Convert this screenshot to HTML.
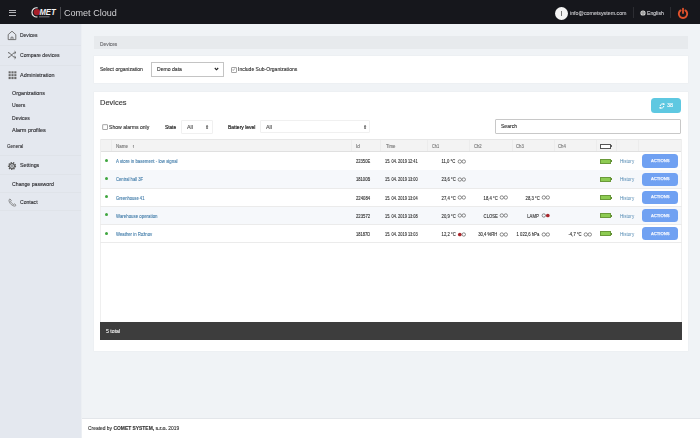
<!DOCTYPE html>
<html><head><meta charset="utf-8">
<style>
*{box-sizing:border-box;margin:0;padding:0}
html,body{width:700px;height:438px;overflow:hidden}
body{font-family:"Liberation Sans",sans-serif;background:#eef1f5;position:relative;color:#333}
.a{position:absolute}
.t{filter:blur(0.3px);position:absolute;white-space:nowrap;line-height:1;-webkit-text-stroke:0.12px currentColor}
</style></head><body>
<div class="a" style="left:0px;top:0px;width:700px;height:24.6px;background:#16171c;"></div>
<div class="a" style="left:8.6px;top:9.950000000000001px;width:7.8px;height:0.9px;background:#b4b4b8;"></div>
<div class="a" style="left:8.6px;top:12.350000000000001px;width:7.8px;height:0.9px;background:#b4b4b8;"></div>
<div class="a" style="left:8.6px;top:14.850000000000001px;width:7.8px;height:0.9px;background:#b4b4b8;"></div>
<svg class="a" style="left:28px;top:4px" width="34" height="17" viewBox="0 0 34 17">
<circle cx="8.9" cy="8.1" r="3.2" fill="#a81e28"/>
<path d="M9.6 3.9 A4.6 4.6 0 1 0 9.4 12.9" stroke="#e8e8e8" stroke-width="1.2" fill="none"/>
<text x="11.4" y="10.6" font-family="Liberation Sans" font-weight="700" font-style="italic" font-size="8.6" fill="#f2f2f2" textLength="16.2" lengthAdjust="spacingAndGlyphs">MET</text>
<rect x="11" y="12.2" width="10.5" height="1.2" fill="#6a6a6e"/>
</svg>
<div class="a" style="left:59.5px;top:6.7px;width:1px;height:12px;background:#4a4b50;"></div>
<div class="t" style="left:63.6px;top:8.23px;font-size:9.5px;color:#d2d2d5;font-weight:400;transform:scaleX(0.952);transform-origin:left center;-webkit-text-stroke:0;">Comet Cloud</div>
<div class="a" style="left:554.5px;top:7px;width:13px;height:13px;border-radius:50%;background:#f4f4f4"></div>
<div class="a" style="left:560.8px;top:11.2px;width:0.5px;height:4.6px;background:#777;"></div>
<div class="t" style="left:570.4px;top:10.86px;font-size:5.4px;color:#c4c4c8;font-weight:400;transform:scaleX(0.981);transform-origin:left center;">info@cometsystem.com</div>
<div class="a" style="left:633px;top:7px;width:0.6px;height:11px;background:#2c2d32;"></div>
<svg class="a" style="left:640px;top:9.7px" width="6" height="6" viewBox="0 0 6 6"><circle cx="3" cy="3" r="2.6" fill="#dedede"/><path d="M0.6 3 H5.4 M3 0.5 C1.8 1.8 1.8 4.2 3 5.5 C4.2 4.2 4.2 1.8 3 0.5" stroke="#555" stroke-width="0.45" fill="none"/></svg>
<div class="t" style="left:646.9px;top:10.51px;font-size:5.3px;color:#d0d0d4;font-weight:400;transform:scaleX(0.966);transform-origin:left center;">English</div>
<div class="a" style="left:670px;top:7px;width:0.6px;height:11px;background:#2c2d32;"></div>
<svg class="a" style="left:676px;top:6px" width="14" height="14" viewBox="0 0 14 14">
<path d="M4.6 4.4 A4.2 4.2 0 1 0 9.4 4.4" stroke="#e0522c" stroke-width="1.9" fill="none" stroke-linecap="round"/>
<line x1="7" y1="2.6" x2="7" y2="7" stroke="#e0522c" stroke-width="1.8" stroke-linecap="round"/>
</svg>
<div class="a" style="left:0px;top:24px;width:81px;height:414px;background:#e4e8ef;"></div>
<div class="a" style="left:81px;top:24px;width:1px;height:414px;background:#eceff3;"></div>
<div class="a" style="left:0px;top:45.2px;width:81px;height:0.6px;background:#dfe3e9;"></div>
<div class="a" style="left:0px;top:65.2px;width:81px;height:0.6px;background:#dfe3e9;"></div>
<div class="a" style="left:0px;top:155px;width:81px;height:0.6px;background:#dfe3e9;"></div>
<div class="a" style="left:0px;top:173.6px;width:81px;height:0.6px;background:#dfe3e9;"></div>
<div class="a" style="left:0px;top:192px;width:81px;height:0.6px;background:#dfe3e9;"></div>
<div class="a" style="left:0px;top:209.5px;width:81px;height:0.6px;background:#dfe3e9;"></div>
<svg class="a" style="left:7px;top:30px" width="10" height="11" viewBox="0 0 10 11">
<path d="M1.2 4.6 L5 1.2 L8.8 4.6 L8.8 9.6 L1.2 9.6 Z" stroke="#666" stroke-width="0.9" fill="none" stroke-linejoin="round"/>
<path d="M4 9.6 V7.2 H6 V9.6" stroke="#666" stroke-width="0.8" fill="none"/>
</svg>
<div class="t" style="left:19.7px;top:33.11px;font-size:5.3px;color:#2c2c30;font-weight:400;transform:scaleX(0.934);transform-origin:left center;">Devices</div>
<svg class="a" style="left:7px;top:50px" width="10" height="10" viewBox="0 0 10 10">
<path d="M1 2.5 C4 2.5 5 7.5 8.5 7.5 M1 7.5 C4 7.5 5 2.5 8.5 2.5" stroke="#555" stroke-width="0.9" fill="none"/>
<path d="M7.5 1.2 L9 2.5 L7.5 3.8 M7.5 6.2 L9 7.5 L7.5 8.8" stroke="#555" stroke-width="0.8" fill="none"/>
</svg>
<div class="t" style="left:19.7px;top:52.91px;font-size:5.3px;color:#2c2c30;font-weight:400;transform:scaleX(0.960);transform-origin:left center;">Compare devices</div>
<svg class="a" style="left:7.5px;top:70.5px" width="9" height="9" viewBox="0 0 9 9"><rect x="0.6" y="0.3" width="2.1" height="2.1" fill="#6a6a6a"/><rect x="0.6" y="3.15" width="2.1" height="2.1" fill="#6a6a6a"/><rect x="0.6" y="6.0" width="2.1" height="2.1" fill="#6a6a6a"/><rect x="3.45" y="0.3" width="2.1" height="2.1" fill="#6a6a6a"/><rect x="3.45" y="3.15" width="2.1" height="2.1" fill="#6a6a6a"/><rect x="3.45" y="6.0" width="2.1" height="2.1" fill="#6a6a6a"/><rect x="6.3" y="0.3" width="2.1" height="2.1" fill="#6a6a6a"/><rect x="6.3" y="3.15" width="2.1" height="2.1" fill="#6a6a6a"/><rect x="6.3" y="6.0" width="2.1" height="2.1" fill="#6a6a6a"/></svg>
<div class="t" style="left:19.7px;top:72.91px;font-size:5.3px;color:#2c2c30;font-weight:400;transform:scaleX(1.027);transform-origin:left center;">Administration</div>
<div class="t" style="left:12px;top:91.31px;font-size:5.3px;color:#2c2c30;font-weight:400;transform:scaleX(1.009);transform-origin:left center;">Organizations</div>
<div class="t" style="left:12px;top:103.21px;font-size:5.3px;color:#2c2c30;font-weight:400;transform:scaleX(0.961);transform-origin:left center;">Users</div>
<div class="t" style="left:12px;top:115.61px;font-size:5.3px;color:#2c2c30;font-weight:400;transform:scaleX(0.949);transform-origin:left center;">Devices</div>
<div class="t" style="left:12px;top:127.91px;font-size:5.3px;color:#2c2c30;font-weight:400;transform:scaleX(1.046);transform-origin:left center;">Alarm profiles</div>
<div class="t" style="left:6.8px;top:145.34px;font-size:4.8px;color:#3a3a3e;font-weight:400;transform:scaleX(0.954);transform-origin:left center;">General</div>
<svg class="a" style="left:7px;top:160.5px" width="10" height="10" viewBox="0 0 10 10">
<circle cx="5" cy="5" r="3.3" stroke="#5a5a5a" stroke-width="1.6" fill="none" stroke-dasharray="1.3 1.0"/>
<circle cx="5" cy="5" r="2.4" stroke="#5a5a5a" stroke-width="1.1" fill="none"/>
<circle cx="5" cy="5" r="0.9" fill="#7a7a7a"/>
</svg>
<div class="t" style="left:19.7px;top:163.11px;font-size:5.3px;color:#2c2c30;font-weight:400;transform:scaleX(1.008);transform-origin:left center;">Settings</div>
<div class="t" style="left:12px;top:181.61px;font-size:5.3px;color:#2c2c30;font-weight:400;transform:scaleX(0.981);transform-origin:left center;">Change password</div>
<svg class="a" style="left:8px;top:198px" width="9" height="9" viewBox="0 0 10 10">
<path d="M2.2 1 C1 1.6 0.8 3 1.6 4.6 C2.6 6.6 4.4 8.4 6.6 8.9 C7.8 9.2 8.6 8.8 8.9 8 L7.4 6.6 L6.2 7.2 C4.8 6.6 3.4 5.2 2.9 3.9 L3.6 2.7 Z" stroke="#666" stroke-width="0.8" fill="none" stroke-linejoin="round"/>
</svg>
<div class="t" style="left:19.7px;top:200.41px;font-size:5.3px;color:#2c2c30;font-weight:400;transform:scaleX(0.963);transform-origin:left center;">Contact</div>
<div class="a" style="left:82px;top:24px;width:618px;height:394px;background:#f0f3f6;"></div>
<div class="a" style="left:94px;top:35.6px;width:594px;height:13.9px;background:#e7eaed;"></div>
<div class="t" style="left:99.6px;top:41.65px;font-size:5.0px;color:#6a6a6e;font-weight:400;transform:scaleX(0.973);transform-origin:left center;">Devices</div>
<div class="a" style="left:94px;top:56px;width:594px;height:26.5px;background:#ffffff;box-shadow:0 0 0 0.5px #eaedf0;"></div>
<div class="t" style="left:100px;top:67.06px;font-size:5.2px;color:#333;font-weight:400;transform:scaleX(0.972);transform-origin:left center;">Select organization</div>
<div class="a" style="left:151px;top:62px;width:72.6px;height:14.9px;background:#fff;border:0.8px solid #c4c4c4;"></div>
<div class="t" style="left:157px;top:67.06px;font-size:5.2px;color:#333;font-weight:400;transform:scaleX(0.983);transform-origin:left center;">Demo data</div>
<svg class="a" style="left:213.6px;top:67.2px" width="5" height="4" viewBox="0 0 5 4"><path d="M0.8 1 L2.5 2.8 L4.2 1" stroke="#222" stroke-width="1.1" fill="none"/></svg>
<svg class="a" style="left:230.8px;top:66.6px" width="6" height="6" viewBox="0 0 6 6"><rect x="0.7" y="0.7" width="4.6" height="4.6" fill="#fff" stroke="#6a6a6a" stroke-width="0.6"/></svg>
<svg class="a" style="left:231.3px;top:67.1px" width="5" height="5" viewBox="0 0 5 5"><path d="M1.2 2.5 L2.2 3.5 L3.9 1.4" stroke="#666" stroke-width="0.6" fill="none"/></svg>
<div class="t" style="left:237.6px;top:67.06px;font-size:5.2px;color:#333;font-weight:400;transform:scaleX(0.969);transform-origin:left center;">Include Sub-Organizations</div>
<div class="a" style="left:94px;top:92.1px;width:594px;height:259.3px;background:#ffffff;box-shadow:0 0 0 0.5px #eaedf0;"></div>
<div class="t" style="left:100px;top:98.84px;font-size:8.0px;color:#333;font-weight:400;transform:scaleX(0.935);transform-origin:left center;">Devices</div>
<div class="a" style="left:651px;top:97.8px;width:30.4px;height:15.5px;background:#5ec8e1;border-radius:3.5px;"></div>
<svg class="a" style="left:658.6px;top:102.7px" width="6" height="6" viewBox="0 0 6 6"><path d="M4.6 1.6 A2 2 0 0 0 1.2 3" stroke="#fff" stroke-width="1" fill="none"/><path d="M1.4 4.4 A2 2 0 0 0 4.8 3" stroke="#fff" stroke-width="1" fill="none"/><path d="M3.8 0.6 L5.2 0.6 L5.2 2 Z M2.2 5.4 L0.8 5.4 L0.8 4 Z" fill="#fff" stroke="#fff" stroke-width="0.5"/></svg>
<div class="t" style="left:667px;top:103.25px;font-size:5px;color:#fff;font-weight:400;transform:scaleX(1.079);transform-origin:left center;">38</div>
<svg class="a" style="left:102px;top:124.4px" width="6" height="6" viewBox="0 0 6 6"><rect x="0.8" y="0.8" width="4.6" height="4.6" fill="#fff" stroke="#6a6a6a" stroke-width="0.6"/></svg>
<div class="t" style="left:108.6px;top:125.06px;font-size:5.2px;color:#333;font-weight:400;transform:scaleX(0.984);transform-origin:left center;">Show alarms only</div>
<div class="t" style="left:164.6px;top:124.96px;font-size:5.2px;color:#2a2a2a;font-weight:400;transform:scaleX(0.914);transform-origin:left center;-webkit-text-stroke:0.2px #2a2a2a;">State</div>
<div class="a" style="left:181px;top:120.4px;width:31.6px;height:13.2px;background:#fff;border:0.6px solid #f0f0f0;border-radius:1px;"></div>
<div class="t" style="left:187px;top:125.84px;font-size:4.8px;color:#555;font-weight:400;transform:scaleX(1.124);transform-origin:left center;">All</div>
<div class="t" style="left:205.2px;top:125.89px;font-size:4.5px;color:#444;font-weight:400;">&#8661;</div>
<div class="t" style="left:227.6px;top:124.76px;font-size:5.2px;color:#2a2a2a;font-weight:400;transform:scaleX(0.961);transform-origin:left center;-webkit-text-stroke:0.2px #2a2a2a;">Battery level</div>
<div class="a" style="left:260px;top:120px;width:109.7px;height:13.3px;background:#fff;border:0.6px solid #f0f0f0;border-radius:1px;"></div>
<div class="t" style="left:265.7px;top:125.54px;font-size:4.8px;color:#555;font-weight:400;transform:scaleX(1.124);transform-origin:left center;">All</div>
<div class="t" style="left:363.2px;top:125.59px;font-size:4.5px;color:#444;font-weight:400;">&#8661;</div>
<div class="a" style="left:495px;top:119.4px;width:186.4px;height:14.9px;background:#fff;border:0.7px solid #c8c8c8;border-radius:1px;"></div>
<div class="t" style="left:501px;top:124.54px;font-size:4.8px;color:#333;font-weight:400;transform:scaleX(1.052);transform-origin:left center;">Search</div>
<div class="a" style="left:100px;top:139.3px;width:581.6px;height:12.3px;background:#f3f3f3;border-top:0.6px solid #e6e6e6;"></div>
<div class="a" style="left:100px;top:151.3px;width:581.6px;height:0.7px;background:#e0e0e0;"></div>
<div class="a" style="left:111.3px;top:140px;width:0.6px;height:11.3px;background:#ececec;"></div>
<div class="a" style="left:351.1px;top:140px;width:0.6px;height:11.3px;background:#ececec;"></div>
<div class="a" style="left:380.3px;top:140px;width:0.6px;height:11.3px;background:#ececec;"></div>
<div class="a" style="left:426.6px;top:140px;width:0.6px;height:11.3px;background:#ececec;"></div>
<div class="a" style="left:468.9px;top:140px;width:0.6px;height:11.3px;background:#ececec;"></div>
<div class="a" style="left:511.7px;top:140px;width:0.6px;height:11.3px;background:#ececec;"></div>
<div class="a" style="left:553.8px;top:140px;width:0.6px;height:11.3px;background:#ececec;"></div>
<div class="a" style="left:596.2px;top:140px;width:0.6px;height:11.3px;background:#ececec;"></div>
<div class="a" style="left:615.7px;top:140px;width:0.6px;height:11.3px;background:#ececec;"></div>
<div class="a" style="left:638px;top:140px;width:0.6px;height:11.3px;background:#ececec;"></div>
<div class="t" style="left:115.6px;top:145.24px;font-size:4.6px;color:#777;font-weight:400;transform:scaleX(0.978);transform-origin:left center;">Name</div>
<div class="t" style="left:132.2px;top:144.84px;font-size:4.6px;color:#555;font-weight:400;">&#8593;</div>
<div class="t" style="left:355.8px;top:145.24px;font-size:4.6px;color:#777;font-weight:400;transform:scaleX(1.016);transform-origin:left center;">Id</div>
<div class="t" style="left:385.5px;top:145.24px;font-size:4.6px;color:#777;font-weight:400;transform:scaleX(0.935);transform-origin:left center;">Time</div>
<div class="t" style="left:432.3px;top:145.24px;font-size:4.6px;color:#777;font-weight:400;transform:scaleX(0.853);transform-origin:left center;">Ch1</div>
<div class="t" style="left:474px;top:145.24px;font-size:4.6px;color:#777;font-weight:400;transform:scaleX(0.912);transform-origin:left center;">Ch2</div>
<div class="t" style="left:516px;top:145.24px;font-size:4.6px;color:#777;font-weight:400;transform:scaleX(0.924);transform-origin:left center;">Ch3</div>
<div class="t" style="left:558px;top:145.24px;font-size:4.6px;color:#777;font-weight:400;transform:scaleX(0.924);transform-origin:left center;">Ch4</div>
<div class="a" style="left:600px;top:143.8px;width:11px;height:4.8px;background:#fff;border:0.6px solid #555;"></div>
<div class="a" style="left:611px;top:145.2px;width:0.8px;height:2px;background:#666;"></div>
<div class="a" style="left:100px;top:139.3px;width:0.6px;height:183px;background:#efefef;"></div>
<div class="a" style="left:681.0px;top:139.3px;width:0.6px;height:183px;background:#efefef;"></div>
<div class="a" style="left:100px;top:169.54999999999998px;width:581.6px;height:0.6px;background:#ebebeb;"></div>
<div class="a" style="left:105px;top:158.90px;width:3px;height:3px;border-radius:50%;background:#3fa63f"></div>
<div class="t" style="left:115.6px;top:160.29px;font-size:4.7px;color:#4a82ad;font-weight:400;transform:scaleX(0.930);transform-origin:left center;">A store in basement - low signal</div>
<div class="t" style="left:355.8px;top:160.29px;font-size:4.7px;color:#333;font-weight:400;transform:scaleX(0.876);transform-origin:left center;">22350E</div>
<div class="t" style="left:385.3px;top:160.29px;font-size:4.7px;color:#333;font-weight:400;transform:scaleX(0.837);transform-origin:left center;">15. 04. 2019 12:41</div>
<svg class="a" style="left:457.20px;top:157.90px" width="10" height="7" viewBox="0 0 10 7"><circle cx="2.8" cy="3.5" r="1.7" fill="none" stroke="#505050" stroke-width="0.65"/><circle cx="6.8" cy="3.5" r="1.7" fill="none" stroke="#505050" stroke-width="0.65"/></svg>
<div class="t" style="right:244.40px;top:160.29px;font-size:4.7px;color:#333;font-weight:400;transform:scaleX(0.900);transform-origin:right center;">11,0 °C</div>
<div class="a" style="left:600px;top:158.7px;width:10.8px;height:5.0px;background:#8dcb52;border:0.5px solid #6a9a3a;"></div>
<div class="a" style="left:610.8px;top:160.2px;width:0.9px;height:2px;background:#5f8f30;"></div>
<div class="t" style="left:619.8px;top:160.29px;font-size:4.7px;color:#5088b2;font-weight:400;transform:scaleX(0.971);transform-origin:left center;-webkit-text-stroke:0;">History</div>
<div class="a" style="left:642px;top:154.39999999999998px;width:36px;height:13.3px;background:#70a1f2;border-radius:3.5px;"></div>
<div class="t" style="left:651px;top:159.13px;font-size:4.4px;color:#f4f7ff;font-weight:400;transform:scaleX(0.951);transform-origin:left center;-webkit-text-stroke:0.25px #f4f7ff;">ACTIONS</div>
<div class="a" style="left:100.6px;top:170.45px;width:580.4px;height:17.25px;background:#f6f8fb;"></div>
<div class="a" style="left:100px;top:187.7px;width:581.6px;height:0.6px;background:#ebebeb;"></div>
<div class="a" style="left:105px;top:177.05px;width:3px;height:3px;border-radius:50%;background:#3fa63f"></div>
<div class="t" style="left:115.6px;top:178.44px;font-size:4.7px;color:#4a82ad;font-weight:400;transform:scaleX(0.890);transform-origin:left center;">Central hall 3F</div>
<div class="t" style="left:355.8px;top:178.44px;font-size:4.7px;color:#333;font-weight:400;transform:scaleX(0.876);transform-origin:left center;">18100B</div>
<div class="t" style="left:385.3px;top:178.44px;font-size:4.7px;color:#333;font-weight:400;transform:scaleX(0.837);transform-origin:left center;">15. 04. 2019 13:00</div>
<svg class="a" style="left:457.20px;top:176.05px" width="10" height="7" viewBox="0 0 10 7"><circle cx="2.8" cy="3.5" r="1.7" fill="none" stroke="#505050" stroke-width="0.65"/><circle cx="6.8" cy="3.5" r="1.7" fill="none" stroke="#505050" stroke-width="0.65"/></svg>
<div class="t" style="right:244.40px;top:178.44px;font-size:4.7px;color:#333;font-weight:400;transform:scaleX(0.900);transform-origin:right center;">23,6 °C</div>
<div class="a" style="left:600px;top:176.85px;width:10.8px;height:5.0px;background:#8dcb52;border:0.5px solid #6a9a3a;"></div>
<div class="a" style="left:610.8px;top:178.35px;width:0.9px;height:2px;background:#5f8f30;"></div>
<div class="t" style="left:619.8px;top:178.44px;font-size:4.7px;color:#5088b2;font-weight:400;transform:scaleX(0.971);transform-origin:left center;-webkit-text-stroke:0;">History</div>
<div class="a" style="left:642px;top:172.54999999999998px;width:36px;height:13.3px;background:#70a1f2;border-radius:3.5px;"></div>
<div class="t" style="left:651px;top:177.28px;font-size:4.4px;color:#f4f7ff;font-weight:400;transform:scaleX(0.951);transform-origin:left center;-webkit-text-stroke:0.25px #f4f7ff;">ACTIONS</div>
<div class="a" style="left:100px;top:205.85px;width:581.6px;height:0.6px;background:#ebebeb;"></div>
<div class="a" style="left:105px;top:195.20px;width:3px;height:3px;border-radius:50%;background:#3fa63f"></div>
<div class="t" style="left:115.6px;top:196.59px;font-size:4.7px;color:#4a82ad;font-weight:400;transform:scaleX(0.880);transform-origin:left center;">Greenhouse 41</div>
<div class="t" style="left:355.8px;top:196.59px;font-size:4.7px;color:#333;font-weight:400;transform:scaleX(0.905);transform-origin:left center;">224084</div>
<div class="t" style="left:385.3px;top:196.59px;font-size:4.7px;color:#333;font-weight:400;transform:scaleX(0.837);transform-origin:left center;">15. 04. 2019 13:04</div>
<svg class="a" style="left:457.20px;top:194.20px" width="10" height="7" viewBox="0 0 10 7"><circle cx="2.8" cy="3.5" r="1.7" fill="none" stroke="#505050" stroke-width="0.65"/><circle cx="6.8" cy="3.5" r="1.7" fill="none" stroke="#505050" stroke-width="0.65"/></svg>
<div class="t" style="right:244.40px;top:196.59px;font-size:4.7px;color:#333;font-weight:400;transform:scaleX(0.900);transform-origin:right center;">27,4 °C</div>
<svg class="a" style="left:499.00px;top:194.20px" width="10" height="7" viewBox="0 0 10 7"><circle cx="2.8" cy="3.5" r="1.7" fill="none" stroke="#505050" stroke-width="0.65"/><circle cx="6.8" cy="3.5" r="1.7" fill="none" stroke="#505050" stroke-width="0.65"/></svg>
<div class="t" style="right:202.60px;top:196.59px;font-size:4.7px;color:#333;font-weight:400;transform:scaleX(0.900);transform-origin:right center;">18,4 °C</div>
<svg class="a" style="left:540.80px;top:194.20px" width="10" height="7" viewBox="0 0 10 7"><circle cx="2.8" cy="3.5" r="1.7" fill="none" stroke="#505050" stroke-width="0.65"/><circle cx="6.8" cy="3.5" r="1.7" fill="none" stroke="#505050" stroke-width="0.65"/></svg>
<div class="t" style="right:160.80px;top:196.59px;font-size:4.7px;color:#333;font-weight:400;transform:scaleX(0.900);transform-origin:right center;">28,3 °C</div>
<div class="a" style="left:600px;top:195.0px;width:10.8px;height:5.0px;background:#8dcb52;border:0.5px solid #6a9a3a;"></div>
<div class="a" style="left:610.8px;top:196.5px;width:0.9px;height:2px;background:#5f8f30;"></div>
<div class="t" style="left:619.8px;top:196.59px;font-size:4.7px;color:#5088b2;font-weight:400;transform:scaleX(0.971);transform-origin:left center;-webkit-text-stroke:0;">History</div>
<div class="a" style="left:642px;top:190.7px;width:36px;height:13.3px;background:#70a1f2;border-radius:3.5px;"></div>
<div class="t" style="left:651px;top:195.43px;font-size:4.4px;color:#f4f7ff;font-weight:400;transform:scaleX(0.951);transform-origin:left center;-webkit-text-stroke:0.25px #f4f7ff;">ACTIONS</div>
<div class="a" style="left:100.6px;top:206.74999999999997px;width:580.4px;height:17.25px;background:#f6f8fb;"></div>
<div class="a" style="left:100px;top:223.99999999999997px;width:581.6px;height:0.6px;background:#ebebeb;"></div>
<div class="a" style="left:105px;top:213.35px;width:3px;height:3px;border-radius:50%;background:#3fa63f"></div>
<div class="t" style="left:115.6px;top:214.74px;font-size:4.7px;color:#4a82ad;font-weight:400;transform:scaleX(0.929);transform-origin:left center;">Warehouse operation</div>
<div class="t" style="left:355.8px;top:214.74px;font-size:4.7px;color:#333;font-weight:400;transform:scaleX(0.905);transform-origin:left center;">223572</div>
<div class="t" style="left:385.3px;top:214.74px;font-size:4.7px;color:#333;font-weight:400;transform:scaleX(0.837);transform-origin:left center;">15. 04. 2019 13:08</div>
<svg class="a" style="left:457.20px;top:212.35px" width="10" height="7" viewBox="0 0 10 7"><circle cx="2.8" cy="3.5" r="1.7" fill="none" stroke="#505050" stroke-width="0.65"/><circle cx="6.8" cy="3.5" r="1.7" fill="none" stroke="#505050" stroke-width="0.65"/></svg>
<div class="t" style="right:244.40px;top:214.74px;font-size:4.7px;color:#333;font-weight:400;transform:scaleX(0.900);transform-origin:right center;">20,9 °C</div>
<svg class="a" style="left:499.00px;top:212.35px" width="10" height="7" viewBox="0 0 10 7"><circle cx="2.8" cy="3.5" r="1.7" fill="none" stroke="#505050" stroke-width="0.65"/><circle cx="6.8" cy="3.5" r="1.7" fill="none" stroke="#505050" stroke-width="0.65"/></svg>
<div class="t" style="right:202.60px;top:214.74px;font-size:4.7px;color:#333;font-weight:400;transform:scaleX(0.900);transform-origin:right center;">CLOSE</div>
<svg class="a" style="left:540.80px;top:212.35px" width="10" height="7" viewBox="0 0 10 7"><circle cx="2.8" cy="3.5" r="1.7" fill="none" stroke="#505050" stroke-width="0.65"/><circle cx="6.8" cy="3.5" r="1.85" fill="#a8262c"/></svg>
<div class="t" style="right:160.80px;top:214.74px;font-size:4.7px;color:#333;font-weight:400;transform:scaleX(0.900);transform-origin:right center;">LAMP</div>
<div class="a" style="left:600px;top:213.14999999999998px;width:10.8px;height:5.0px;background:#8dcb52;border:0.5px solid #6a9a3a;"></div>
<div class="a" style="left:610.8px;top:214.64999999999998px;width:0.9px;height:2px;background:#5f8f30;"></div>
<div class="t" style="left:619.8px;top:214.74px;font-size:4.7px;color:#5088b2;font-weight:400;transform:scaleX(0.971);transform-origin:left center;-webkit-text-stroke:0;">History</div>
<div class="a" style="left:642px;top:208.84999999999997px;width:36px;height:13.3px;background:#70a1f2;border-radius:3.5px;"></div>
<div class="t" style="left:651px;top:213.58px;font-size:4.4px;color:#f4f7ff;font-weight:400;transform:scaleX(0.951);transform-origin:left center;-webkit-text-stroke:0.25px #f4f7ff;">ACTIONS</div>
<div class="a" style="left:100px;top:242.14999999999998px;width:581.6px;height:0.6px;background:#ebebeb;"></div>
<div class="a" style="left:105px;top:231.50px;width:3px;height:3px;border-radius:50%;background:#3fa63f"></div>
<div class="t" style="left:115.6px;top:232.89px;font-size:4.7px;color:#4a82ad;font-weight:400;transform:scaleX(0.910);transform-origin:left center;">Weather in Rožnov</div>
<div class="t" style="left:355.8px;top:232.89px;font-size:4.7px;color:#333;font-weight:400;transform:scaleX(0.862);transform-origin:left center;">18187D</div>
<div class="t" style="left:385.3px;top:232.89px;font-size:4.7px;color:#333;font-weight:400;transform:scaleX(0.837);transform-origin:left center;">15. 04. 2019 13:03</div>
<svg class="a" style="left:457.20px;top:230.50px" width="10" height="7" viewBox="0 0 10 7"><circle cx="2.8" cy="3.5" r="1.85" fill="#a8262c"/><circle cx="6.8" cy="3.5" r="1.7" fill="none" stroke="#505050" stroke-width="0.65"/></svg>
<div class="t" style="right:244.40px;top:232.89px;font-size:4.7px;color:#333;font-weight:400;transform:scaleX(0.900);transform-origin:right center;">12,2 °C</div>
<svg class="a" style="left:499.00px;top:230.50px" width="10" height="7" viewBox="0 0 10 7"><circle cx="2.8" cy="3.5" r="1.7" fill="none" stroke="#505050" stroke-width="0.65"/><circle cx="6.8" cy="3.5" r="1.7" fill="none" stroke="#505050" stroke-width="0.65"/></svg>
<div class="t" style="right:202.60px;top:232.89px;font-size:4.7px;color:#333;font-weight:400;transform:scaleX(0.900);transform-origin:right center;">30,4 %RH</div>
<svg class="a" style="left:540.80px;top:230.50px" width="10" height="7" viewBox="0 0 10 7"><circle cx="2.8" cy="3.5" r="1.7" fill="none" stroke="#505050" stroke-width="0.65"/><circle cx="6.8" cy="3.5" r="1.7" fill="none" stroke="#505050" stroke-width="0.65"/></svg>
<div class="t" style="right:160.80px;top:232.89px;font-size:4.7px;color:#333;font-weight:400;transform:scaleX(0.900);transform-origin:right center;">1 022,6 hPa</div>
<svg class="a" style="left:582.80px;top:230.50px" width="10" height="7" viewBox="0 0 10 7"><circle cx="2.8" cy="3.5" r="1.7" fill="none" stroke="#505050" stroke-width="0.65"/><circle cx="6.8" cy="3.5" r="1.7" fill="none" stroke="#505050" stroke-width="0.65"/></svg>
<div class="t" style="right:118.80px;top:232.89px;font-size:4.7px;color:#333;font-weight:400;transform:scaleX(0.900);transform-origin:right center;">-4,7 °C</div>
<div class="a" style="left:600px;top:231.29999999999998px;width:10.8px;height:5.0px;background:#8dcb52;border:0.5px solid #6a9a3a;"></div>
<div class="a" style="left:610.8px;top:232.79999999999998px;width:0.9px;height:2px;background:#5f8f30;"></div>
<div class="t" style="left:619.8px;top:232.89px;font-size:4.7px;color:#5088b2;font-weight:400;transform:scaleX(0.971);transform-origin:left center;-webkit-text-stroke:0;">History</div>
<div class="a" style="left:642px;top:226.99999999999997px;width:36px;height:13.3px;background:#70a1f2;border-radius:3.5px;"></div>
<div class="t" style="left:651px;top:231.73px;font-size:4.4px;color:#f4f7ff;font-weight:400;transform:scaleX(0.951);transform-origin:left center;-webkit-text-stroke:0.25px #f4f7ff;">ACTIONS</div>
<div class="a" style="left:100px;top:322px;width:581.6px;height:18px;background:#3d3d3d;"></div>
<div class="t" style="left:105.7px;top:328.56px;font-size:5.2px;color:#f0f0f0;font-weight:400;transform:scaleX(1.002);transform-origin:left center;">5 total</div>
<div class="a" style="left:82px;top:418.4px;width:618px;height:19.6px;background:#ffffff;border-top:0.6px solid #e3e6ea;"></div>
<div class="t" style="left:87.6px;top:426.20px;font-size:5.1px;color:#333;font-weight:400;transform:scaleX(0.965);transform-origin:left center;">Created by <b>COMET SYSTEM, s.r.o.</b> 2019</div>
</body></html>
